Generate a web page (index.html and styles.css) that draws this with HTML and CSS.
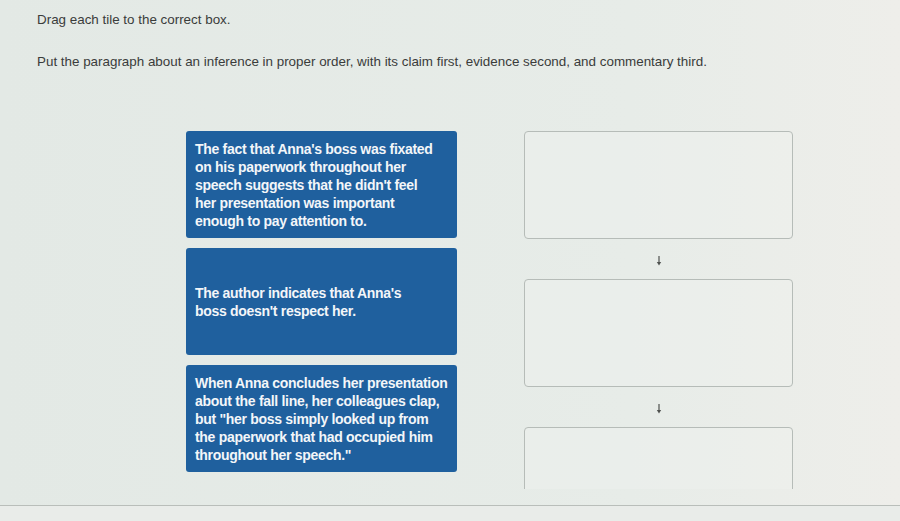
FILE: index.html
```html
<!DOCTYPE html>
<html lang="en">
<head>
    <meta charset="UTF-8">
    <meta name="viewport" content="width=device-width, initial-scale=1.0">
    <title>Drag each tile to the correct box</title>
    <link rel="stylesheet" href="styles.css">
</head>
<body>
    <!-- Question prompt -->
    <div class="prompt">
        <p class="prompt-line">Drag each tile to the correct box.</p>
        <p class="prompt-line prompt-task">Put the paragraph about an inference in proper order, with its claim first, evidence second, and commentary third.</p>
    </div>

    <div class="board">
        <!-- Tiles waiting to be placed -->
        <div class="tile-list">
            <div class="tile">The fact that Anna's boss was fixated<br>on his paperwork throughout her<br>speech suggests that he didn't feel<br>her presentation was important<br>enough to pay attention to.</div>
            <div class="tile">The author indicates that Anna's<br>boss doesn't respect her.</div>
            <div class="tile">When Anna concludes her presentation<br>about the fall line, her colleagues clap,<br>but "her boss simply looked up from<br>the paperwork that had occupied him<br>throughout her speech."</div>
        </div>

        <!-- Drop targets, in order -->
        <div class="drop-list">
            <div class="drop-box"></div>
            <div class="arrow">
                <svg width="6" height="10" viewBox="0 0 6 10"><path d="M3 0 V7" stroke="#4f524f" stroke-width="1.2"/><path d="M0.8 6 L3 9.6 L5.2 6 Z" fill="#4f524f"/></svg>
            </div>
            <div class="drop-box"></div>
            <div class="arrow">
                <svg width="6" height="10" viewBox="0 0 6 10"><path d="M3 0 V7" stroke="#4f524f" stroke-width="1.2"/><path d="M0.8 6 L3 9.6 L5.2 6 Z" fill="#4f524f"/></svg>
            </div>
            <div class="drop-box"></div>
        </div>
    </div>

    <footer class="footer"></footer>
</body>
</html>
```

FILE: styles.css
```css
/* Page basics */
body {
    margin: 0;
    font-family: "Liberation Sans", Arial, sans-serif;
    background: linear-gradient(90deg, #e3e9e5 0%, #e7ece8 70%, #eeeeea 100%);
    height: 100vh;
    overflow: hidden;
    display: flex;
    flex-direction: column;
}

/* Prompt text */
.prompt {
    padding: 12px 37px 0;
    color: #3a3c3b;
    font-size: 13.4px;
}

.prompt-line {
    margin: 0;
    line-height: 16px;
}

.prompt-task {
    margin-top: 26px;
}

/* Two-column board: tiles on the left, boxes on the right */
.board {
    display: flex;
    gap: 67px;
    padding-left: 186px;
    margin-top: 61px;
    height: 358px;
    overflow: hidden;
}

.tile-list {
    width: 271px;
    display: flex;
    flex-direction: column;
    gap: 10px;
}

.tile {
    height: 107px;
    box-sizing: border-box;
    padding: 0 4px 0 9px;
    display: flex;
    align-items: center;
    white-space: nowrap;
    background-color: #1f609e;
    border-radius: 3px;
    color: #f3f6f9;
    font-size: 14px;
    font-weight: bold;
    line-height: 18px;
    letter-spacing: -0.3px;
}

.drop-list {
    width: 269px;
    display: flex;
    flex-direction: column;
}

.drop-box {
    height: 108px;
    flex-shrink: 0;
    box-sizing: border-box;
    border: 1px solid #b6bcb8;
    border-radius: 4px;
    background-color: rgba(240, 243, 240, 0.35);
}

.arrow {
    height: 40px;
    flex-shrink: 0;
    display: flex;
    align-items: center;
    justify-content: center;
}

.arrow svg {
    margin-top: 4px;
}

/* Bottom bar */
.footer {
    margin-top: 16px;
    flex: 1;
    border-top: 1px solid #b9beba;
    background-color: #e9ece9;
}
```
